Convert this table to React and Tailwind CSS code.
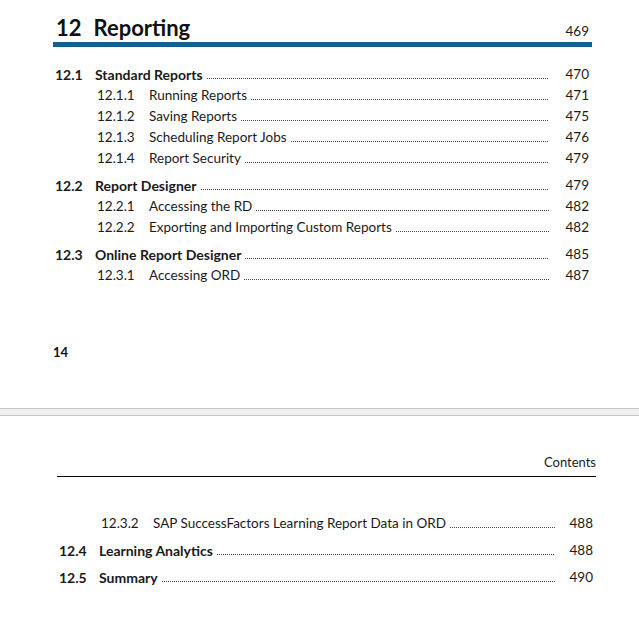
const TOP = [
  { num: '12.1', title: 'Standard Reports', page: '470', section: true },
  { num: '12.1.1', title: 'Running Reports', page: '471' },
  { num: '12.1.2', title: 'Saving Reports', page: '475' },
  { num: '12.1.3', title: 'Scheduling Report Jobs', page: '476' },
  { num: '12.1.4', title: 'Report Security', page: '479' },
  { num: '12.2', title: 'Report Designer', page: '479', section: true },
  { num: '12.2.1', title: 'Accessing the RD', page: '482' },
  { num: '12.2.2', title: 'Exporting and Importing Custom Reports', page: '482' },
  { num: '12.3', title: 'Online Report Designer', page: '485', section: true },
  { num: '12.3.1', title: 'Accessing ORD', page: '487' },
];

const BOTTOM = [
  { num: '12.3.2', title: 'SAP SuccessFactors Learning Report Data in ORD', page: '488' },
  { num: '12.4', title: 'Learning Analytics', page: '488', section: true },
  { num: '12.5', title: 'Summary', page: '490', section: true },
];

function TocRow({ num, title, page, section, pageWidth = 'w-[40px]' }) {
  return (
    <div className={`flex h-[21px] items-center leading-[21px] text-[#1a1a1a] ${section ? 'mt-[6px] text-[14px] font-bold' : 'pl-[44px] text-[13.5px]'}`}>
      {section ? (
        <span className="w-[42px] shrink-0 pl-[2px]">{num}</span>
      ) : (
        <span className="w-[52px] shrink-0">{num}</span>
      )}
      <span className="shrink-0 pr-[4px]">{title}</span>
      <span className="mt-[8px] h-[1px] flex-1 bg-[linear-gradient(to_right,#444_50%,transparent_50%)] bg-[length:2px_1px] bg-repeat-x" />
      <span className={`${pageWidth} shrink-0 text-right text-[13.5px] font-normal`}>{page}</span>
    </div>
  );
}

export default function App() {
  return (
    <div className="w-[639px] h-[617px] overflow-hidden bg-white font-['Lato',sans-serif]">
      {/* page 14 */}
      <div className="h-[408px] pt-[14px]">
        <div className="ml-[53px] w-[539px]">
          <div className="flex h-[28px] items-baseline justify-between pl-[3px] pr-[3px] leading-[28px]">
            <h1 className="text-[22px] font-bold text-[#111]">
              12<span className="inline-block w-[12px]" />Reporting
            </h1>
            <span className="text-[13.5px] leading-[16px] text-[#1a1a1a]">469</span>
          </div>
          <div className="h-[5px] bg-[#13608e]" />
          <div className="pt-[11px] pr-[3px]">
            {TOP.map(r => <TocRow key={r.num} {...r} />)}
          </div>
        </div>
        <div className="mt-[58px] ml-[53px] text-[13px] font-bold leading-[16px] text-[#111]">14</div>
      </div>

      {/* page break */}
      <div className="h-[8px] border-y border-[#c4c4c4] bg-[#efefef]" />

      {/* next page */}
      <div className="ml-[57px] w-[539px]">
        <div className="border-b border-black pt-[38px] pb-[6px] text-right text-[13px] leading-[16px] text-[#1a1a1a]">
          Contents
        </div>
        <div className="pt-[36px] pr-[3px]">
          {BOTTOM.map(r => <TocRow key={r.num} {...r} pageWidth="w-[38px]" />)}
        </div>
      </div>
    </div>
  );
}
